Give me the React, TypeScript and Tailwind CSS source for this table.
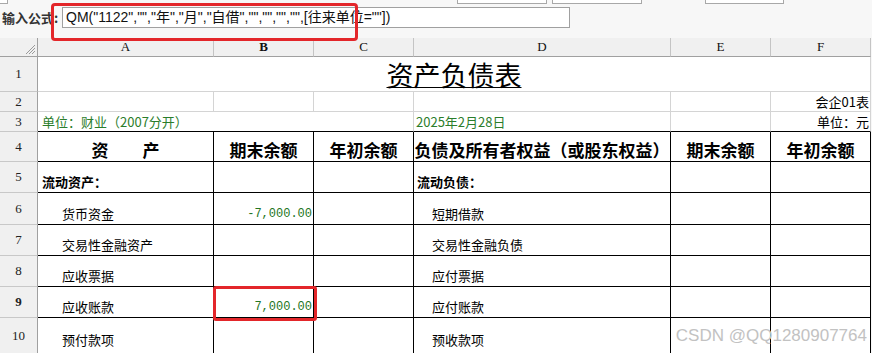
import React from 'react';

const CJK = "'Noto Sans CJK SC', 'Liberation Sans', sans-serif";
const COLS = 'grid-cols-[38px_176px_100px_100px_257px_100px_100px]';

const BODY = [
  { n: 5, a: '流动资产：', d: '流动负债：', head: true, h: 'h-[31px]' },
  { n: 6, a: '货币资金', b: '-7,000.00', d: '短期借款', h: 'h-[32px]' },
  { n: 7, a: '交易性金融资产', d: '交易性金融负债', h: 'h-[31px]' },
  { n: 8, a: '应收票据', d: '应付票据', h: 'h-[31px]' },
  { n: 9, a: '应收账款', b: '7,000.00', d: '应付账款', h: 'h-[31px]', sel: true },
  { n: 10, a: '预付款项', d: '预收款项', h: 'h-[40px]', last: true },
];

function RowNum({ n, bold, h, last }: { n: number; bold?: boolean; h: string; last?: boolean }) {
  return (
    <div
      className={`${h} flex justify-center bg-[#f0f0f0] border-r border-b border-r-[#a0a0a0] border-b-[#c8c8c8] text-[13px] text-[#222] ${bold ? 'font-bold' : ''} ${last ? 'items-start pt-[8px]' : 'items-center'}`}
      style={{ fontFamily: "'Liberation Serif', serif" }}
    >
      {n}
    </div>
  );
}

function Hatch() {
  return (
    <svg width="11" height="11" viewBox="0 0 11 11" className="absolute right-[1px] bottom-[1px]">
      <path d="M10 1 L1 10 M10 4 L4 10 M10 7 L7 10" stroke="#9a9a9a" strokeWidth="1" />
    </svg>
  );
}

export default function App() {
  return (
    <div className="w-[872px] h-[353px] overflow-hidden bg-[#f7f7f7] relative" style={{ fontFamily: CJK }}>
      {/* toolbar remnants */}
      <div className="flex h-[4px]">
        <div className="w-[8px] border-r border-b border-[#a8a8a8] bg-white" />
        <div className="w-[449px]" />
        <div className="w-[90px] border-x border-b border-[#a8a8a8] bg-white" />
        <div className="w-[5px]" />
        <div className="w-[90px] border-x border-b border-[#a8a8a8] bg-white" />
        <div className="w-[63px]" />
        <div className="w-[79px] border-x border-b border-[#a8a8a8] bg-white" />
      </div>

      {/* formula bar */}
      <div className="h-[34px] flex items-start pt-[3px]">
        <div className="w-[62px] h-[21px] flex items-center pl-[2px] text-[13px] font-bold text-[#333]">输入公式:</div>
        <div
          className="w-[508px] h-[21px] bg-white border border-[#a0a0a0] flex items-center pl-[3px] text-[14px] text-[#111]"
          style={{ fontFamily: "'Liberation Sans', 'Noto Sans CJK SC', sans-serif" }}
        >
          QM("1122","","年","月","自借","","","","",[往来单位=""])
        </div>
      </div>
      <div className="absolute z-10 left-[51px] top-[3px] w-[307px] h-[38px] border-[3px] border-[#e3262a] rounded-[4px]" />

      {/* sheet */}
      <div className={`grid ${COLS} w-[871px]`}>
        {/* column headers */}
        <div className="relative h-[19px] bg-[#f0f0f0] border-r border-b border-r-[#a0a0a0] border-b-[#a0a0a0]">
          <Hatch />
        </div>
        {['A', 'B', 'C', 'D', 'E', 'F'].map((c) => (
          <div
            key={c}
            className={`h-[19px] flex items-center justify-center bg-[#f0f0f0] border-r border-b border-r-[#c4c4c4] border-b-[#a0a0a0] text-[13px] text-[#111] ${c === 'B' ? 'font-bold' : ''}`}
            style={{ fontFamily: "'Liberation Serif', serif" }}
          >
            {c}
          </div>
        ))}

        {/* row 1 */}
        <RowNum n={1} h="h-[35px]" />
        <div className="col-span-6 h-[35px] bg-white border-r border-b border-[#d4d4d4] flex items-end justify-center">
          <span className="text-[27px] leading-[32px] underline decoration-1 underline-offset-[1px] text-black">资产负债表</span>
        </div>

        {/* row 2 */}
        <RowNum n={2} h="h-[20px]" />
        {[0, 1, 2, 3, 4].map((i) => (
          <div key={i} className="h-[20px] bg-white border-r border-b border-[#d4d4d4]" />
        ))}
        <div className="h-[20px] bg-white border-r border-b border-[#d4d4d4] flex items-end justify-end pr-[1px] text-[13px] leading-[18px] text-black">
          会企01表
        </div>

        {/* row 3 */}
        <RowNum n={3} h="h-[20px]" />
        <div className="col-span-3 h-[20px] bg-white border-r border-b border-r-[#d4d4d4] border-b-black flex items-end pl-[4px] text-[13px] leading-[18px] text-[#2b7d2b]">
          单位：财业（2007分开）
        </div>
        <div className="h-[20px] bg-white border-r border-b border-r-[#d4d4d4] border-b-black flex items-end pl-[2px] text-[13px] leading-[18px] text-[#2b7d2b]">
          2025年2月28日
        </div>
        <div className="h-[20px] bg-white border-r border-b border-r-[#d4d4d4] border-b-black" />
        <div className="h-[20px] bg-white border-r border-b border-r-[#d4d4d4] border-b-black flex items-end justify-end pr-[1px] text-[13px] leading-[18px] text-black">
          单位：元
        </div>

        {/* row 4 */}
        <RowNum n={4} h="h-[30px]" />
        {['资　　产', '期末余额', '年初余额', '负债及所有者权益（或股东权益）', '期末余额', '年初余额'].map((t, i) => (
          <div
            key={i}
            className="h-[30px] bg-white border-r border-b border-black flex items-end justify-center text-[17px] leading-[22px] font-bold text-black"
          >
            {t}
          </div>
        ))}

        {/* body rows */}
        {BODY.map((r) => (
          <React.Fragment key={r.n}>
            <RowNum n={r.n} h={r.h} bold={r.sel} last={r.last} />
            <div
              className={`${r.h} bg-white border-r border-b border-black flex text-[13px] leading-[20px] text-black ${r.head ? 'pl-[4px] font-bold' : 'pl-[24px]'} ${r.last ? 'items-start pt-[12px]' : 'items-end'}`}
            >
              {r.a}
            </div>
            <div
              className={`${r.h} relative bg-white border-r border-b border-black flex items-end justify-end pr-[1px] text-[12px] leading-[20px] text-[#237523]`}
              style={{ fontFamily: "'Liberation Mono', monospace" }}
            >
              {r.b}
              {r.sel && (
                <div className="absolute z-10 -left-[1px] -top-[1px] w-[104px] h-[35px] border-[3px] border-[#e3262a] rounded-[3px]" />
              )}
            </div>
            <div className={`${r.h} bg-white border-r border-b border-black`} />
            <div
              className={`${r.h} bg-white border-r border-b border-black flex text-[13px] leading-[20px] text-black ${r.head ? 'pl-[3px] font-bold' : 'pl-[18px]'} ${r.last ? 'items-start pt-[12px]' : 'items-end'}`}
            >
              {r.d}
            </div>
            <div className={`${r.h} bg-white border-r border-b border-black`} />
            <div className={`${r.h} bg-white border-r border-b border-black`} />
          </React.Fragment>
        ))}
      </div>

      <div
        className="absolute z-10 right-[5px] bottom-[9px] text-[17px] leading-none text-[#c2c2c2]"
        style={{ fontFamily: "'Liberation Sans', sans-serif" }}
      >
        CSDN @QQ1280907764
      </div>
    </div>
  );
}
